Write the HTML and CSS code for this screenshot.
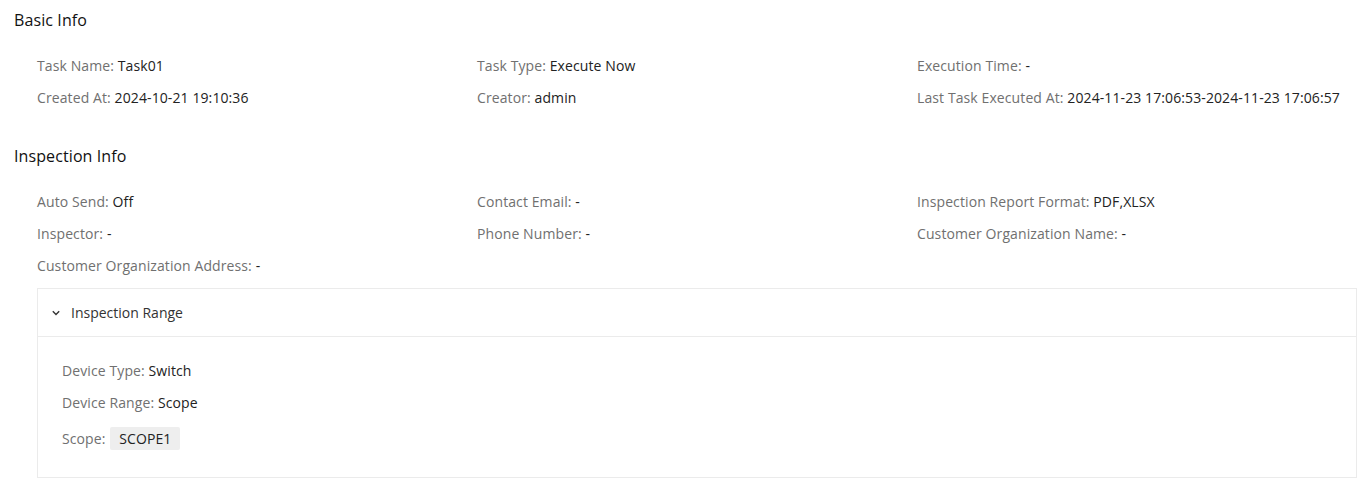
FILE: index.html
```html
<!DOCTYPE html>
<html lang="en">

<head>
    <meta charset="UTF-8" />
    <meta name="viewport" content="width=device-width, initial-scale=1.0" />
    <title>Task Detail</title>
    <link rel="stylesheet" href="styles.css">
</head>

<body class="page">
    <section class="block">
        <h3 class="block-title">Basic Info</h3>
        <div class="info-grid">
            <div class="info-item"><span class="info-label">Task Name:</span> <span class="info-value">Task01</span></div>
            <div class="info-item"><span class="info-label">Task Type:</span> <span class="info-value">Execute Now</span></div>
            <div class="info-item"><span class="info-label">Execution Time:</span> <span class="info-value">-</span></div>
            <div class="info-item"><span class="info-label">Created At:</span> <span class="info-value">2024-10-21 19:10:36</span></div>
            <div class="info-item"><span class="info-label">Creator:</span> <span class="info-value">admin</span></div>
            <div class="info-item"><span class="info-label">Last Task Executed At:</span> <span class="info-value">2024-11-23 17:06:53-2024-11-23 17:06:57</span></div>
        </div>
    </section>

    <section class="block block-next">
        <h3 class="block-title">Inspection Info</h3>
        <div class="info-grid">
            <div class="info-item"><span class="info-label">Auto Send:</span> <span class="info-value">Off</span></div>
            <div class="info-item"><span class="info-label">Contact Email:</span> <span class="info-value">-</span></div>
            <div class="info-item"><span class="info-label">Inspection Report Format:</span> <span class="info-value">PDF,XLSX</span></div>
            <div class="info-item"><span class="info-label">Inspector:</span> <span class="info-value">-</span></div>
            <div class="info-item"><span class="info-label">Phone Number:</span> <span class="info-value">-</span></div>
            <div class="info-item"><span class="info-label">Customer Organization Name:</span> <span class="info-value">-</span></div>
            <div class="info-item"><span class="info-label">Customer Organization Address:</span> <span class="info-value">-</span></div>
        </div>

        <div class="collapse">
            <div class="collapse-head">
                <svg class="collapse-arrow" width="10" height="10" viewBox="0 0 10 10">
                    <path d="M1.8 3.3 L5 6.5 L8.2 3.3" fill="none" stroke="#333" stroke-width="1.4" />
                </svg>
                <span>Inspection Range</span>
            </div>
            <div class="collapse-body">
                <div class="info-item"><span class="info-label">Device Type:</span> <span class="info-value">Switch</span></div>
                <div class="info-item"><span class="info-label">Device Range:</span> <span class="info-value">Scope</span></div>
                <div class="info-item scope-row"><span class="info-label">Scope:</span> <span class="scope-tag">SCOPE1</span></div>
            </div>
        </div>
    </section>
</body>

</html>
```

FILE: styles.css
```css
.page {
    margin: 0;
    padding: 0 11px 0 14px;
    background-color: rgb(255, 255, 255);
    font-family: "Open Sans", "Noto Sans", sans-serif;
    font-size: 14px;
    color: rgb(34, 34, 34);
}

.block {
    padding-top: 8px;
}

.block-next {
    padding-top: 36px;
}

.block-title {
    margin: 0;
    height: 24px;
    line-height: 24px;
    font-size: 16px;
    font-weight: 400;
    letter-spacing: 0.1px;
    color: rgb(17, 17, 17);
}

.info-grid {
    display: grid;
    grid-template-columns: repeat(3, 440px);
    padding: 24px 0 0 23px;
    row-gap: 12px;
}

.info-item {
    height: 20px;
    line-height: 20px;
    white-space: nowrap;
    letter-spacing: 0.1px;
}

.info-label {
    color: rgb(112, 112, 112);
}

.info-value {
    color: rgb(34, 34, 34);
}

.collapse {
    margin: 12px 0 0 23px;
    border: 1px solid rgb(235, 235, 235);
}

.collapse-head {
    display: flex;
    align-items: center;
    gap: 10px;
    height: 47px;
    padding-left: 13px;
    border-bottom: 1px solid rgb(235, 235, 235);
    color: rgb(51, 51, 51);
}

.collapse-body {
    display: flex;
    flex-direction: column;
    gap: 12px;
    padding: 24px 0 27px 24px;
}

.scope-row {
    height: 23px;
    line-height: 23px;
    margin-top: 2px;
}

.scope-tag {
    display: inline-block;
    margin-left: 1px;
    padding: 0 9px;
    height: 23px;
    line-height: 23px;
    background-color: rgb(238, 238, 238);
    border-radius: 2px;
    color: rgb(34, 34, 34);
}
```
